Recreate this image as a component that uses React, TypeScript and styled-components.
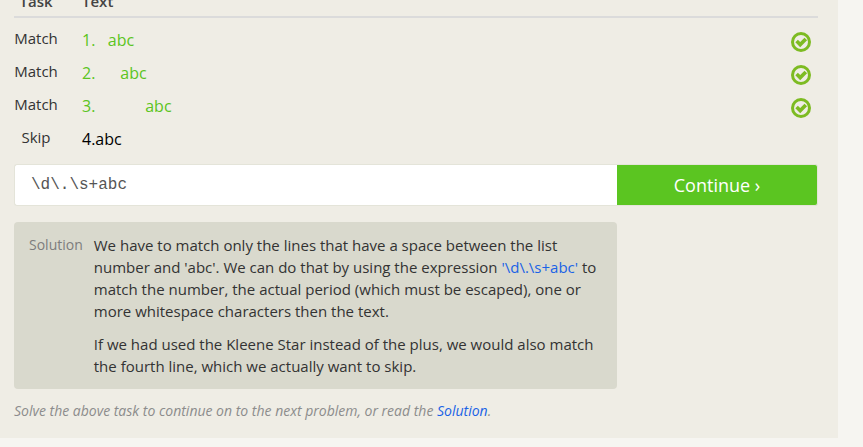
import React, { useState } from 'react';
import styled, { createGlobalStyle } from 'styled-components';

const GlobalStyle = createGlobalStyle`
  *, *::before, *::after { box-sizing: border-box; }
  html { overflow: hidden; }
  body {
    margin: 0;
    background: #f6f5f1;
    color: #333;
    font-family: 'Open Sans', 'Noto Sans', sans-serif;
    font-size: 15px;
    line-height: 22px;
  }
`;

const Page = styled.div`
  overflow: hidden;
`;

const Card = styled.main`
  margin: -10px 25px 0 0;
  padding: 0 20px 16px 14px;
  background: #efede5;
`;

const TaskTable = styled.table`
  width: 100%;
  border-collapse: separate;
  border-spacing: 0;
  margin-bottom: 7px;
`;

const HeadCell = styled.th<{ $align?: 'left' | 'center' }>`
  padding: 0 0 4px;
  border-bottom: 2px solid #dbdbdb;
  font-weight: 600;
  color: #444;
  text-align: ${({ $align = 'left' }) => $align};
`;

const SpacerRow = styled.tr`
  height: 7px;
`;

const TaskCell = styled.td`
  width: 44px;
  height: 33px;
  padding: 2px 0 0;
  vertical-align: top;
  text-align: center;
`;

const TextCell = styled.td<{ $matched: boolean }>`
  padding: 4px 0 0 24px;
  vertical-align: top;
  white-space: pre;
  font-size: 16px;
  color: ${({ $matched }) => ($matched ? '#5bc421' : '#000')};
`;

const TextHead = styled(HeadCell)`
  padding-left: 24px;
`;

const StatusCell = styled.td`
  width: 27px;
  padding: 7px 7px 0 0;
  vertical-align: top;

  svg { display: block; }
`;

const AnswerForm = styled.form`
  display: flex;
  height: 42px;
  margin-bottom: 16px;
`;

const AnswerInput = styled.input`
  flex: 0 0 75%;
  min-width: 0;
  padding: 0 16px;
  border: 1px solid #e4e4d9;
  border-right: 0;
  border-radius: 3px 0 0 3px;
  background: #fff;
  color: #555;
  font-family: 'Liberation Mono', monospace;
  font-size: 16px;
  outline: none;
`;

const ContinueButton = styled.button`
  flex: 1 1 0;
  border: 1px solid #e4e4d9;
  border-left: 0;
  border-radius: 0 3px 3px 0;
  padding: 0;
  background: #5bc521;
  color: #fff;
  font: inherit;
  font-size: 18px;
  cursor: pointer;
`;

const SolutionPanel = styled.section`
  display: flex;
  gap: 11px;
  width: 75%;
  padding: 12px 15px;
  border-radius: 4px;
  background: #d9d9cd;
`;

const SolutionLabel = styled.span`
  flex: none;
  color: #7d7d7d;
  font-size: 14px;
`;

const SolutionBody = styled.div`
  flex: 1;
  min-width: 0;

  p { margin: 0; }
  p + p { margin-top: 11px; }
`;

const Link = styled.a`
  color: #1a63e6;
  text-decoration: none;
`;

const Hint = styled.p`
  margin: 11px 0 0;
  color: #8c8c8c;
  font-size: 14px;
  font-style: italic;
`;

const CheckIcon = () => (
  <svg width="20" height="20" viewBox="0 0 20 20" role="img" aria-label="Passed">
    <circle cx="10" cy="10" r="8.5" fill="none" stroke="#7dbb22" strokeWidth="3" />
    <path d="M5.6 9 L9.2 12.6 L14.8 7" fill="none" stroke="#7dbb22" strokeWidth="3.6" />
  </svg>
);

const tasks = [
  { task: 'Match', text: '1.   abc', matched: true },
  { task: 'Match', text: '2.      abc', matched: true },
  { task: 'Match', text: '3.            abc', matched: true },
  { task: 'Skip', text: '4.abc', matched: false },
];

export default function App() {
  const [answer, setAnswer] = useState('\\d\\.\\s+abc');

  return (
    <Page>
      <GlobalStyle />
      <Card>
        <TaskTable>
          <thead>
            <tr>
              <HeadCell $align="center">Task</HeadCell>
              <TextHead>Text</TextHead>
              <HeadCell aria-label="Status" />
            </tr>
          </thead>
          <tbody>
            <SpacerRow aria-hidden="true" />
            {tasks.map(({ task, text, matched }) => (
              <tr key={text}>
                <TaskCell>{task}</TaskCell>
                <TextCell $matched={matched}>{text}</TextCell>
                <StatusCell>{matched && <CheckIcon />}</StatusCell>
              </tr>
            ))}
          </tbody>
        </TaskTable>
        <AnswerForm onSubmit={(event) => event.preventDefault()}>
          <AnswerInput
            id="answer"
            type="text"
            aria-label="Your expression"
            spellCheck={false}
            value={answer}
            onChange={(event) => setAnswer(event.target.value)}
          />
          <ContinueButton type="submit">Continue ›</ContinueButton>
        </AnswerForm>
        <SolutionPanel id="solution">
          <SolutionLabel>Solution</SolutionLabel>
          <SolutionBody>
            <p>
              We have to match only the lines that have a space between the list number and 'abc'. We
              can do that by using the expression <Link href="#answer">'\d\.\s+abc'</Link> to match
              the number, the actual period (which must be escaped), one or more whitespace
              characters then the text.
            </p>
            <p>
              If we had used the Kleene Star instead of the plus, we would also match the fourth
              line, which we actually want to skip.
            </p>
          </SolutionBody>
        </SolutionPanel>
        <Hint>
          Solve the above task to continue on to the next problem, or read the{' '}
          <Link href="#solution">Solution</Link>.
        </Hint>
      </Card>
    </Page>
  );
}
